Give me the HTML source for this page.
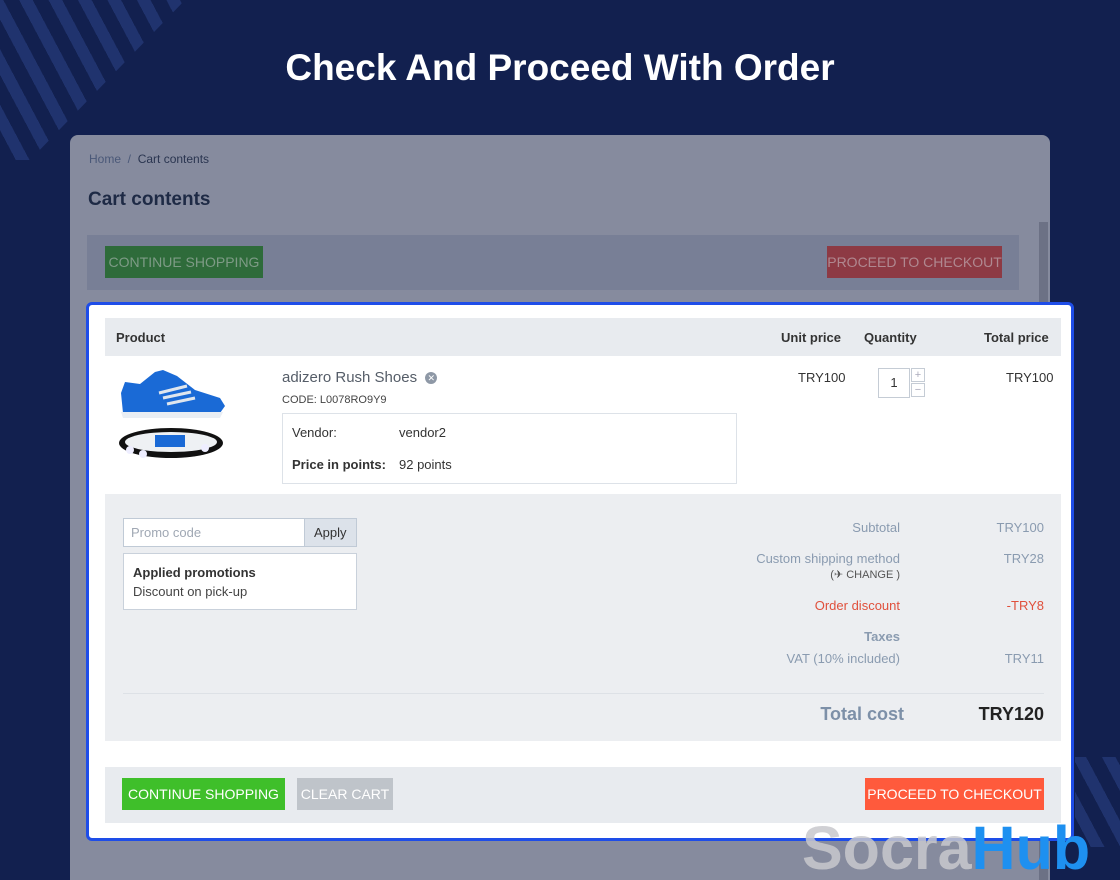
<!DOCTYPE html>
<html><head><meta charset="utf-8"><style>
*{margin:0;padding:0;box-sizing:border-box}
html,body{width:1120px;height:880px;overflow:hidden}
body{background:#12204f;font-family:"Liberation Sans","DejaVu Sans",sans-serif;position:relative;font-size:13px;color:#333}
.a{position:absolute}
.stripes{position:absolute;background:repeating-linear-gradient(62deg,transparent 0 14px,#20336e 14px 26px)}
h1{position:absolute;left:0;width:1120px;top:47px;text-align:center;color:#fff;font-size:37px;font-weight:bold}
.panel{left:70px;top:135px;width:980px;height:745px;background:#868b9e;border-radius:8px 8px 0 0}
.btn{position:absolute;color:#fff;font-size:14px;text-align:center;line-height:32px;height:32px;white-space:nowrap}
.box{left:86px;top:302px;width:988px;height:539px;background:#fff;border:3px solid #1e4de8;border-radius:6px}
.r{text-align:right}
.g{color:#8a9bb0}
</style></head><body>
<div class="stripes" style="left:0;top:0;width:185px;height:160px;clip-path:polygon(0 0,185px 0,185px 0,30px 160px,0 160px)"></div>
<div class="stripes" style="left:1075px;top:757px;width:45px;height:90px"></div>
<h1>Check And Proceed With Order</h1>
<div class="a panel"></div>
<div class="a" style="left:1039px;top:222px;width:9px;height:658px;background:#6c7185"></div>
<div class="a" style="left:89px;top:152px;font-size:12px;color:#4a5878">Home &nbsp;/&nbsp; <span style="color:#2a3550">Cart contents</span></div>
<div class="a" style="left:88px;top:189px;font-size:19px;font-weight:bold;color:#1e2a45">Cart contents</div>
<div class="a" style="left:87px;top:235px;width:932px;height:55px;background:#787f96"></div>
<div class="btn" style="left:105px;top:246px;width:158px;background:#2e6b3a;color:#7e9b86">CONTINUE SHOPPING</div>
<div class="btn" style="left:827px;top:246px;width:175px;background:#8d3a44;color:#b08890">PROCEED TO CHECKOUT</div>

<div class="a box"></div>
<div class="a" style="left:105px;top:318px;width:956px;height:38px;background:#e8ebef"></div>
<div class="a" style="left:116px;top:330px;font-weight:bold;font-size:13px">Product</div>
<div class="a" style="left:781px;top:330px;font-weight:bold">Unit price</div>
<div class="a" style="left:864px;top:330px;font-weight:bold">Quantity</div>
<div class="a" style="left:984px;top:330px;font-weight:bold">Total price</div>

<svg class="a" style="left:115px;top:368px" width="112" height="96" viewBox="0 0 112 96">
<path d="M6 25 L10 14 L25 16 L40 4 L48 2 L62 8 L80 22 L105 30 L110 38 L105 45 L70 45 L40 47 L8 45 Z" fill="#1a6ad6"/>
<path d="M44 25 L72 18 M48 30 L76 24 M52 36 L80 30" stroke="#dfe6ee" stroke-width="3"/>
<path d="M6 44 L108 44 L105 50 L8 50 Z" fill="#e9eef4"/>
<ellipse cx="56" cy="75" rx="52" ry="15" fill="#111"/>
<ellipse cx="56" cy="74" rx="46" ry="10" fill="#eef1f4"/>
<rect x="40" y="67" width="30" height="12" fill="#1a6ad6"/>
<circle cx="15" cy="82" r="4" fill="#eef"/><circle cx="28" cy="86" r="4" fill="#eef"/><circle cx="90" cy="80" r="4" fill="#eef"/>
</svg>
<div class="a" style="left:282px;top:369px;font-size:15px;color:#555d68">adizero Rush Shoes <span style="display:inline-block;width:12px;height:12px;border-radius:50%;background:#8e98a6;color:#fff;font-size:9px;line-height:12px;text-align:center;vertical-align:1px;margin-left:4px">✕</span></div>
<div class="a" style="left:282px;top:394px;font-size:11px;color:#444">CODE: L0078RO9Y9</div>
<div class="a" style="left:282px;top:413px;width:455px;height:71px;border:1px solid #dde2e8"></div>
<div class="a" style="left:292px;top:425px">Vendor:</div>
<div class="a" style="left:399px;top:425px">vendor2</div>
<div class="a" style="left:292px;top:457px;font-weight:bold">Price in points:</div>
<div class="a" style="left:399px;top:457px">92 points</div>
<div class="a" style="left:798px;top:370px">TRY100</div>
<div class="a" style="left:878px;top:368px;width:32px;height:30px;border:1px solid #c5ccd5;text-align:center;line-height:28px">1</div>
<div class="a" style="left:911px;top:368px;width:14px;height:14px;border:1px solid #c5ccd5;color:#aab;font-size:11px;line-height:12px;text-align:center">+</div>
<div class="a" style="left:911px;top:383px;width:14px;height:14px;border:1px solid #c5ccd5;color:#aab;font-size:11px;line-height:12px;text-align:center">−</div>
<div class="a" style="left:1006px;top:370px">TRY100</div>

<div class="a" style="left:105px;top:494px;width:956px;height:247px;background:#eceef1"></div>
<div class="a" style="left:123px;top:518px;width:182px;height:29px;background:#fff;border:1px solid #c0cad6;color:#a0a8b4;padding:6px 7px">Promo code</div>
<div class="a" style="left:304px;top:518px;width:53px;height:29px;background:#dce2ea;border:1px solid #c0cad6;padding:6px 9px">Apply</div>
<div class="a" style="left:123px;top:553px;width:234px;height:57px;background:#fff;border:1px solid #c9d1db"></div>
<div class="a" style="left:133px;top:565px;font-weight:bold">Applied promotions</div>
<div class="a" style="left:133px;top:584px;color:#444">Discount on pick-up</div>
<div class="a r g" style="left:700px;width:200px;top:520px">Subtotal</div>
<div class="a r g" style="left:944px;width:100px;top:520px">TRY100</div>
<div class="a r g" style="left:700px;width:200px;top:551px">Custom shipping method</div>
<div class="a r" style="left:700px;width:200px;top:568px;font-size:11px;color:#555">(✈ CHANGE )</div>
<div class="a r g" style="left:944px;width:100px;top:551px">TRY28</div>
<div class="a r" style="left:700px;width:200px;top:598px;color:#e0503c">Order discount</div>
<div class="a r" style="left:944px;width:100px;top:598px;color:#e0503c">-TRY8</div>
<div class="a r g" style="left:700px;width:200px;top:629px;font-weight:bold">Taxes</div>
<div class="a r g" style="left:700px;width:200px;top:651px">VAT (10% included)</div>
<div class="a r g" style="left:944px;width:100px;top:651px">TRY11</div>
<div class="a" style="left:123px;top:693px;width:921px;height:1px;background:#dde1e6"></div>
<div class="a r" style="left:700px;width:204px;top:704px;font-size:18px;font-weight:bold;color:#7d90a8">Total cost</div>
<div class="a r" style="left:944px;width:100px;top:704px;font-size:18px;font-weight:bold;color:#222">TRY120</div>

<div class="a" style="left:105px;top:767px;width:956px;height:56px;background:#e8ebef"></div>
<div class="btn" style="left:122px;top:778px;width:163px;background:#3fbf2a">CONTINUE SHOPPING</div>
<div class="btn" style="left:297px;top:778px;width:96px;background:#bfc4ca">CLEAR CART</div>
<div class="btn" style="left:865px;top:778px;width:179px;background:#ff5a3c">PROCEED TO CHECKOUT</div>

<div class="a" style="left:802px;top:810px;font-size:61px;font-weight:bold;letter-spacing:0px;line-height:76px;white-space:nowrap"><span style="color:rgba(200,200,205,.85)">Socra</span><span style="color:#1e90f0">Hub</span></div>
</body></html>
